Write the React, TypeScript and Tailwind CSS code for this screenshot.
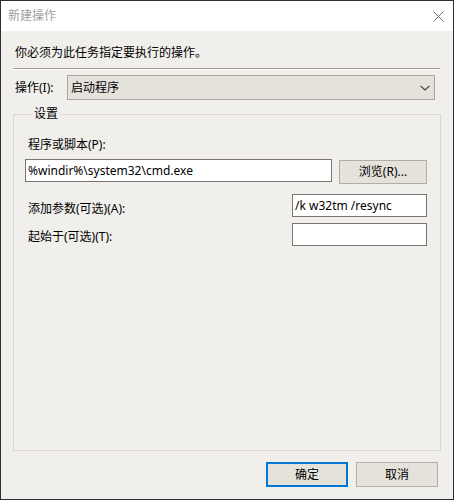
import React from "react";

const font = { fontFamily: '"Noto Sans", "Noto Sans CJK SC", sans-serif' };

export default function App() {
  return (
    <div
      className="w-[454px] h-[500px] border border-[#2e2e2e] flex flex-col text-[12px] leading-[16px] text-black"
      style={font}
    >
      {/* Title bar */}
      <div className="h-[30px] bg-white flex items-center justify-between shrink-0">
        <span className="pl-[7px] text-[#a0a0a0] text-[12px]">新建操作</span>
        <svg width="11" height="11" viewBox="0 0 11 11" className="mr-[9px]">
          <path d="M0.5 0.5 L10.5 10.5 M10.5 0.5 L0.5 10.5" stroke="#6b6b6b" strokeWidth="1" />
        </svg>
      </div>

      {/* Body */}
      <div className="flex-1 bg-[#f0efeb] flex flex-col px-[12px] pb-[12px]">
        <div className="mt-[14px] ml-[2px] h-[16px]">你必须为此任务指定要执行的操作。</div>
        <div className="mt-[7px] h-[2px] mr-[1px] border-t border-t-[#a39b91] border-b border-b-white" />

        <div className="mt-[5px] flex items-center">
          <span className="ml-[2px] w-[52px]">操作(I):</span>
          <div className="h-[25px] w-[368px] bg-[#e5e2dc] border border-[#aca59c] flex items-center justify-between">
            <span className="pl-[3px]">启动程序</span>
            <svg width="10" height="6" viewBox="0 0 10 6" className="mr-[4px]">
              <path d="M0.5 0.8 L5 5 L9.5 0.8" fill="none" stroke="#404040" strokeWidth="1.1" />
            </svg>
          </div>
        </div>

        <fieldset className="mt-[6px] flex-1 border border-[#dcd9d3] pl-[11px] pr-[12px] min-w-0">
          <legend className="ml-[7px] px-[2px] h-[16px] leading-[16px]">设置</legend>
          <div className="mt-[15px] ml-[3px] h-[16px]">程序或脚本(P):</div>
          <div className="mt-[6px] flex items-start">
            <div className="w-[307px] h-[23px] bg-white border border-[#7a756f] flex items-center pl-[2px]">
              %windir%\system32\cmd.exe
            </div>
            <div className="ml-[7px] mt-[1px] w-[88px] h-[24px] bg-[#e5e2dc] border border-[#b3ada5] flex items-center justify-center">
              浏览(R)...
            </div>
          </div>

          <div className="mt-[10px] flex items-start justify-between">
            <span className="ml-[3px] mt-[7px]">添加参数(可选)(A):</span>
            <div className="mr-[1px] w-[135px] h-[23px] bg-white border border-[#7a756f] flex items-center pl-[2px]">
              /k w32tm /resync
            </div>
          </div>

          <div className="mt-[6px] flex items-start justify-between">
            <span className="ml-[3px] mt-[6px]">起始于(可选)(T):</span>
            <div className="mr-[1px] w-[135px] h-[23px] bg-white border border-[#7a756f]" />
          </div>
        </fieldset>

        <div className="mt-[11px] flex justify-end gap-[8px] pr-[3px]">
          <div className="w-[82px] h-[25px] bg-[#e5e2dc] border-2 border-[#0078d7] flex items-center justify-center">
            确定
          </div>
          <div className="w-[82px] h-[25px] bg-[#e5e2dc] border border-[#b3ada5] flex items-center justify-center">
            取消
          </div>
        </div>
      </div>
    </div>
  );
}
